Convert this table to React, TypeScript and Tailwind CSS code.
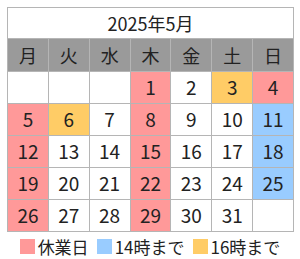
const font = { fontFamily: '"Noto Sans CJK JP", "Noto Sans", sans-serif' };

type Cell = { d?: number; c?: "red" | "blue" | "orange" };

const red = "red" as const;
const blue = "blue" as const;
const orange = "orange" as const;

const weeks: Cell[][] = [
  [{}, {}, {}, { d: 1, c: red }, { d: 2 }, { d: 3, c: orange }, { d: 4, c: red }],
  [{ d: 5, c: red }, { d: 6, c: orange }, { d: 7 }, { d: 8, c: red }, { d: 9 }, { d: 10 }, { d: 11, c: blue }],
  [{ d: 12, c: red }, { d: 13 }, { d: 14 }, { d: 15, c: red }, { d: 16 }, { d: 17 }, { d: 18, c: blue }],
  [{ d: 19, c: red }, { d: 20 }, { d: 21 }, { d: 22, c: red }, { d: 23 }, { d: 24 }, { d: 25, c: blue }],
  [{ d: 26, c: red }, { d: 27 }, { d: 28 }, { d: 29, c: red }, { d: 30 }, { d: 31 }, {}],
];

const bg = {
  red: "bg-[#ff9999]",
  blue: "bg-[#99ccff]",
  orange: "bg-[#ffcc66]",
};

const days = ["月", "火", "水", "木", "金", "土", "日"];

export default function App() {
  return (
    <div className="w-[300px] h-[259px] bg-white pt-[7px] pl-[7px] text-[#222]" style={font}>
      <div className="w-[287px] border border-[#b5b5b5] bg-[#b5b5b5] grid grid-cols-7 gap-px">
        <div className="col-span-7 h-[30px] bg-white flex items-center justify-center text-[18px]">
          2025年5月
        </div>
        {days.map((d) => (
          <div key={d} className="h-[32px] bg-[#9a9a9a] flex items-center justify-center text-[18px]">
            {d}
          </div>
        ))}
        {weeks.flat().map((cell, i) => (
          <div
            key={i}
            className={`h-[31px] flex items-center justify-center text-[19px] ${cell.c ? bg[cell.c] : "bg-white"}`}
          >
            {cell.d}
          </div>
        ))}
      </div>
      <div className="flex items-center justify-center gap-2 mt-[6px] pr-[7px] text-[17px] leading-none">
        <div className="flex items-center gap-[3px]">
          <span className="w-[15px] h-[15px] bg-[#ff9999]" />
          <span>休業日</span>
        </div>
        <div className="flex items-center gap-[3px]">
          <span className="w-[15px] h-[15px] bg-[#99ccff]" />
          <span>14時まで</span>
        </div>
        <div className="flex items-center gap-[3px]">
          <span className="w-[15px] h-[15px] bg-[#ffcc66]" />
          <span>16時まで</span>
        </div>
      </div>
    </div>
  );
}
